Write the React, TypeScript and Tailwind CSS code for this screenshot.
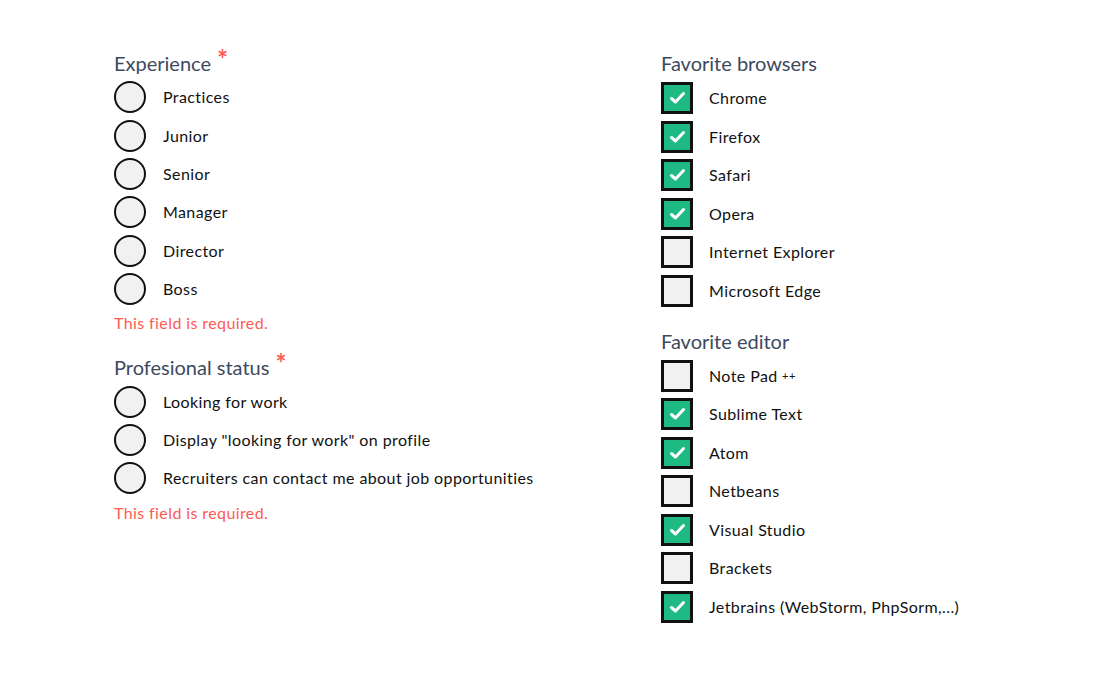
const experience = ['Practices', 'Junior', 'Senior', 'Manager', 'Director', 'Boss']
const status = ['Looking for work', 'Display "looking for work" on profile', 'Recruiters can contact me about job opportunities']
const browsers = [
  { label: 'Chrome', checked: true },
  { label: 'Firefox', checked: true },
  { label: 'Safari', checked: true },
  { label: 'Opera', checked: true },
  { label: 'Internet Explorer', checked: false },
  { label: 'Microsoft Edge', checked: false },
]
const editors = [
  { label: 'Note Pad ++', checked: false },
  { label: 'Sublime Text', checked: true },
  { label: 'Atom', checked: true },
  { label: 'Netbeans', checked: false },
  { label: 'Visual Studio', checked: true },
  { label: 'Brackets', checked: false },
  { label: 'Jetbrains (WebStorm, PhpSorm,...)', checked: true },
]

function Title({ text, required }: { text: string; required?: boolean }) {
  return (
    <div className="h-[28px] leading-[28px] text-[20px] text-[#3d4a5e] flex items-start">
      {text}
      {required && <span className="ml-[6px] text-[#ff5a52] text-[26px] font-bold leading-[26px] -mt-[3px]">*</span>}
    </div>
  )
}

function Radio({ label }: { label: string }) {
  return (
    <div className="h-[38.4px] flex items-center">
      <span className="w-[32px] h-[32px] rounded-full border-2 border-[#111] bg-[#f1f1f1] shrink-0" />
      <span className="ml-[17px] text-[16px] tracking-[0.4px] text-[#111]">{label}</span>
    </div>
  )
}

function Check({ label, checked }: { label: string; checked: boolean }) {
  return (
    <div className="h-[38.5px] flex items-center">
      <span
        className={`w-[32px] h-[32px] border-[3px] border-[#111] shrink-0 flex items-center justify-center ${checked ? 'bg-[#1fba84]' : 'bg-[#f1f1f1]'}`}
      >
        {checked && (
          <svg width="17" height="14" viewBox="0 0 17 14">
            <path d="M2.5 7.5 L6.5 11 L14.5 2.5" fill="none" stroke="white" strokeWidth="3" strokeLinecap="round" strokeLinejoin="round" />
          </svg>
        )}
      </span>
      <span className="ml-[16px] text-[16px] tracking-[0.4px] text-[#111]">
        {label === 'Note Pad ++' ? (
          <>Note Pad <span className="text-[11px] align-[2px]">++</span></>
        ) : label}
      </span>
    </div>
  )
}

export default function App() {
  return (
    <main className="min-h-screen bg-white font-['Lato',sans-serif] pl-[114px] grid grid-cols-[547px_1fr]">
      <div className="pt-[49px]">
        <Title text="Experience" required />
        <div className="mt-[1px]">
          {experience.map(x => <Radio key={x} label={x} />)}
        </div>
        <p className="mt-[5px] h-[20px] leading-[20px] text-[16px] tracking-[0.4px] text-[#ff5a52]">This field is required.</p>
        <div className="mt-[20px]">
          <Title text="Profesional status" required />
          <div className="mt-[1px]">
            {status.map(x => <Radio key={x} label={x} />)}
          </div>
        </div>
        <p className="mt-[5px] h-[20px] leading-[20px] text-[16px] tracking-[0.4px] text-[#ff5a52]">This field is required.</p>
      </div>
      <div className="pt-[49px]">
        <Title text="Favorite browsers" />
        <div className="mt-[2px]">
          {browsers.map(b => <Check key={b.label} {...b} />)}
        </div>
        <div className="mt-[17px]">
          <Title text="Favorite editor" />
          <div className="mt-[1.5px]">
            {editors.map(b => <Check key={b.label} {...b} />)}
          </div>
        </div>
      </div>
    </main>
  )
}
